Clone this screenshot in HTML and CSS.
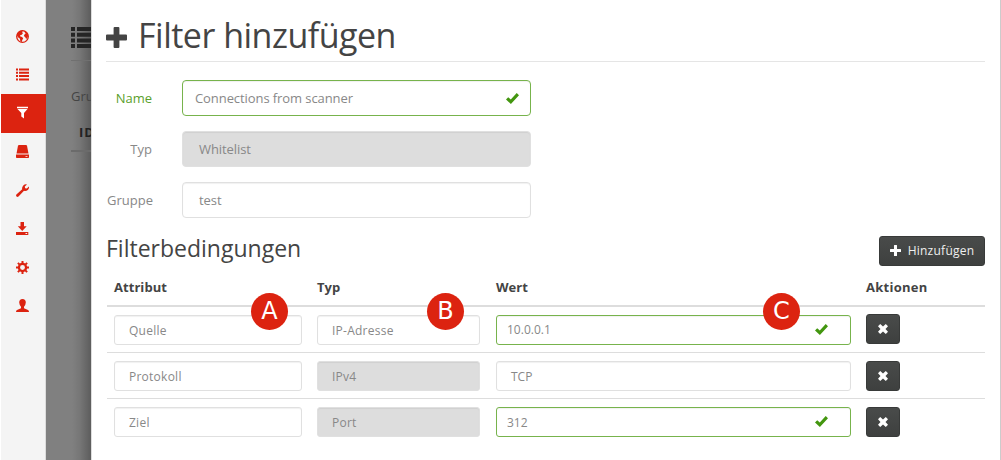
FILE: index.html
```html
<!DOCTYPE html>
<html lang="de">
<head>
<meta charset="utf-8">
<title>Filter hinzufügen</title>
<link rel="stylesheet" href="styles.css">
</head>
<body>
<svg class="symbols" aria-hidden="true">
  <symbol id="list" viewBox="0 0 22 21"><path d="M0 0h4v4H0zM6 0h16v4H6zM0 5.7h4v4H0zM6 5.7h16v4H6zM0 11.4h4v4H0zM6 11.4h16v4H6zM0 17h4v4H0zM6 17h16v4H6z"/></symbol>
  <symbol id="plus" viewBox="0 0 21 21"><path d="M8.6 0h3.8q1 0 1 1v6.6H20q1 0 1 1v3.8q0 1-1 1h-6.6V20q0 1-1 1H8.6q-1 0-1-1v-6.6H1q-1 0-1-1V8.600q0-1 1-1h6.600V1q0-1 1-1z"/></symbol>
  <symbol id="check" viewBox="0 0 13 11"><path d="M0 6.500L2.200 4.200L4.800 6.400L10.700 0L13 2.200L4.900 11z"/></symbol>
  <symbol id="cross" viewBox="0 0 10 10"><path d="M2.200 0L5 2.500L7.800 0L10 2.200L7.500 5L10 7.800L7.800 10L5 7.500L2.200 10L0 7.800L2.500 5L0 2.200z"/></symbol>
</svg>
<div class="app">
  <nav class="sidebar">
    <a class="item"><svg class="icon" viewBox="0 0 13 13"><circle cx="6.500" cy="6.500" r="5.800" fill="none" stroke="currentColor" stroke-width="1.300"/><path d="M1 3.500L3.500 1 7 .6 6 2.300l1 .8-1.200 1.600-1.600.6-.2 1 2 .6 1.200 1.300-.9 1.700-.7 2.300-1.300-.9-.3-2.500L2 7.200 1 5.500zM8 1l3 1.600L12.200 5l-.5 2.300-1.500 1.800L9.300 7.300 7.900 6l.5-1.500 1.200-.8z"/></svg></a>
    <a class="item"><svg class="icon" viewBox="0 0 13 12"><path d="M0 0h2v2H0zM3 0h10v2H3zM0 3.300h2v2H0zM3 3.300h10v2H3zM0 6.600h2v2H0zM3 6.600h10v2H3zM0 10h2v2H0zM3 10h10v2H3z"/></svg></a>
    <a class="item active"><svg class="icon funnel" viewBox="0 0 13 13"><path d="M1 .7h11v1.500H1zM1.500 3h10L8 7v5.500L5.300 10.500V7z"/></svg></a>
    <a class="item"><svg class="icon" viewBox="0 0 13 13"><path d="M3 0h7q.8 0 1 .8L12.500 8.500H.5L2 .8Q2.200 0 3 0z"/><path d="M0 9.500h13v2.700q0 .8-.8.800H.8Q0 13 0 12.200zM9.500 10.900v.9h2v-.9z" fill-rule="evenodd"/></svg></a>
    <a class="item"><svg class="icon" viewBox="0 0 13 13"><path d="M.4 10.400L6.200 5.300Q5.700 3.200 7.300 1.400 9 0 11 .5L8.800 2.600l.3 1.600 1.700.3L13 2.500q.3 2.100-1.200 3.500-1.700 1.400-3.800.8L2.500 12.500Q1.400 13.300.5 12.500-.4 11.400.4 10.400z"/></svg></a>
    <a class="item"><svg class="icon" viewBox="0 0 13 13"><path d="M4.500 0h3.500v4.300h2.700L6.250 9 1.800 4.300h2.700zM0 10h12.300v3H0zM9.500 11v1h1.700v-1z" fill-rule="evenodd"/></svg></a>
    <a class="item"><svg class="icon" viewBox="0 0 13 13"><circle cx="6.500" cy="6.500" r="3.600" fill="none" stroke="currentColor" stroke-width="2.300"/><path d="M5.500 0h2v2.500h-2zM5.500 10.500h2V13h-2zM0 5.500h2.500v2H0zM10.500 5.500H13v2h-2.500zM1.200 2.600l1.400-1.400 1.700 1.700-1.400 1.400zM8.700 10.100l1.400-1.400 1.700 1.700-1.400 1.400zM1.200 10.400l1.700-1.700 1.400 1.400-1.700 1.700zM8.700 2.900l1.700-1.700 1.400 1.400-1.700 1.700z"/></svg></a>
    <a class="item"><svg class="icon" viewBox="0 0 13 13"><path d="M6.500 0Q9.800 0 9.800 3.600 9.600 6.400 8 7.700v1.500l4 1.800q1 .6 1 2H0q0-1.400 1-2l4-1.800V7.700Q3.400 6.400 3.200 3.600 3.200 0 6.500 0z"/></svg></a>
  </nav>
  <div class="underlay">
    <div class="under-title"><svg class="under-icon"><use href="#list"/></svg></div>
    <div class="under-label">Gruppe</div>
    <div class="under-head">ID</div>
  </div>
  <main class="panel">
    <h1 class="title"><svg class="title-icon"><use href="#plus"/></svg><span>Filter hinzufügen</span></h1>
    <form class="form">
      <div class="row valid"><label class="label">Name</label><div class="field"><span>Connections from scanner</span><svg class="check"><use href="#check"/></svg></div></div>
      <div class="row"><label class="label">Typ</label><div class="field select disabled">Whitelist</div></div>
      <div class="row"><label class="label">Gruppe</label><div class="field select">test</div></div>
    </form>
    <div class="section">
      <h2 class="subtitle">Filterbedingungen</h2>
      <button class="button add"><svg class="add-icon"><use href="#plus"/></svg><span>Hinzufügen</span></button>
    </div>
    <div class="table">
      <div class="line head">
        <div class="cell"><span class="th attribute">Attribut</span><span class="badge">A</span></div>
        <div class="cell"><span class="th">Typ</span><span class="badge">B</span></div>
        <div class="cell value-cell"><span class="th wert">Wert</span><span class="badge">C</span></div>
        <div class="cell"><span class="th actions">Aktionen</span></div>
      </div>
      <div class="line">
        <div class="field select">Quelle</div><div class="field select">IP-Adresse</div>
        <div class="field good"><span class="ip">10.0.0.1</span><svg class="check"><use href="#check"/></svg></div>
        <button class="button remove"><svg class="cross"><use href="#cross"/></svg></button>
      </div>
      <div class="line">
        <div class="field select protocol">Protokoll</div><div class="field select disabled ipv">IPv4</div>
        <div class="field select tcp">TCP</div>
        <button class="button remove"><svg class="cross"><use href="#cross"/></svg></button>
      </div>
      <div class="line">
        <div class="field select">Ziel</div><div class="field select disabled">Port</div>
        <div class="field good"><span class="number">312</span><svg class="check"><use href="#check"/></svg></div>
        <button class="button remove"><svg class="cross"><use href="#cross"/></svg></button>
      </div>
    </div>
  </main>
</div>
</body>
</html>
```
FILE: styles.css
```css
* { box-sizing: border-box; }
body { margin: 0; background: #fff; font-family: "Open Sans", sans-serif; font-size: 13px; color: #444; }
svg { fill: currentColor; display: block; flex: none; }
.symbols { display: none; }
.app { display: flex; width: 1001px; height: 460px; overflow: hidden; padding-left: 1px; }
.sidebar { width: 45px; padding-top: 17px; background: #f4f4f4; border-right: 1px solid #dcdcdc; color: #dc2310; flex: none; }
.item { display: flex; align-items: center; justify-content: center; height: 38.500px; margin-right: -1px; padding-right: 2px; }
.active { height: 39px; background: #dc2310; color: #fff; margin-bottom: -.500px; }
.icon { width: 13px; height: 13px; }
.funnel { margin-top: -2px; }
.underlay { width: 45px; flex: none; overflow: hidden; padding-left: 25px; color: #444; background: linear-gradient(90deg, transparent 26px, rgba(0,0,0,.08) 34px, rgba(0,0,0,.28) 45px), #808080; }
.under-title { height: 61px; padding-top: 27px; border-bottom: 1px solid #707070; color: #252525; }
.under-icon { width: 22px; height: 21px; }
.under-label { height: 60px; padding-top: 26px; line-height: 18px; }
.under-head { height: 31px; padding: 2px 0 0 8px; border-bottom: 2px solid #6b6b6b; line-height: 18px; font-weight: 700; letter-spacing: 1px; color: #222; }
.panel { width: 910px; flex: none; padding: 0 15px; border-left: 1px solid #ddd; border-right: 1px solid #ccc; background: #fff; }
.title { display: flex; align-items: center; gap: 11px; height: 62px; margin: 0 0 0 -1px; padding: 9px 0 0; border-bottom: 1px solid #e5e5e5; font-size: 34px; line-height: 44px; font-weight: 400; letter-spacing: -.500px; white-space: nowrap; }
.title-icon { width: 21px; height: 21px; margin-top: 5px; }
.form { display: grid; gap: 15px; padding-top: 18px; }
.row { display: grid; grid-template-columns: 45px 349px; column-gap: 30px; align-items: center; }
.label { text-align: right; color: #888; }
.field { display: flex; align-items: center; justify-content: space-between; height: 36px; padding: 0 11px 0 12px; border: 1px solid #e0e0e0; border-radius: 4px; box-shadow: inset 0 1px 1px rgba(0,0,0,.06); color: #888; background: #fff; white-space: nowrap; letter-spacing: -.080px; }
.select { padding-left: 16px; }
.disabled { background: #ddd; }
.check { width: 13px; height: 11px; color: #43960f; }
.valid .label { color: #5aa02c; }
.valid .field, .good { border-color: #77b34c; }
.section { display: flex; justify-content: space-between; align-items: center; height: 52px; padding-top: 13px; }
.subtitle { margin: -5px 0 0 -1px; font-size: 23px; font-weight: 400; }
.button { display: flex; align-items: center; justify-content: center; height: 30px; padding: 0; border: 1px solid #383a39; border-radius: 3px; background: linear-gradient(#494b4a, #3e403f); color: #fff; font: 12px "Open Sans", sans-serif; }
.add { width: 106px; gap: 7px; color: #eee; letter-spacing: .250px; }
.add-icon { width: 11px; height: 11px; color: #fff; }
.line { display: grid; grid-template-columns: 188px 164px 355px 34px; column-gap: 15px; align-items: start; height: 46px; padding: 8px 0 0 7px; border-top: 1px solid #ddd; }
.line .field { height: 30px; padding-left: 14px; border-radius: 3px; font-size: 12px; letter-spacing: .250px; }
.line .field:nth-child(2) { margin-right: 1px; }
.line .good { padding: 0 22px 0 10px; letter-spacing: 0; }
.ip { margin-top: -1px; }
.good .check { margin-top: -1px; }
.line .tcp { letter-spacing: 0; }
.head { height: 35px; padding-top: 7px; border-top: 0; font-weight: 700; letter-spacing: .050px; }
.head + .line { height: 47px; border-top: 2px solid #ddd; }
.head + .line .remove { margin-top: -1px; }
.cell { position: relative; z-index: 1; line-height: 20px; }
.actions { letter-spacing: .250px; }
.badge { position: absolute; right: 14px; top: 16px; width: 37px; height: 37px; border-radius: 50%; background: #dc2310; color: #fff; font: 24px/37px "DejaVu Sans", sans-serif; letter-spacing: 0; text-align: center; }
.cell:nth-child(2) .badge { right: 17px; }
.value-cell .badge { right: 51px; }
.cross { width: 10px; height: 10px; }
```
